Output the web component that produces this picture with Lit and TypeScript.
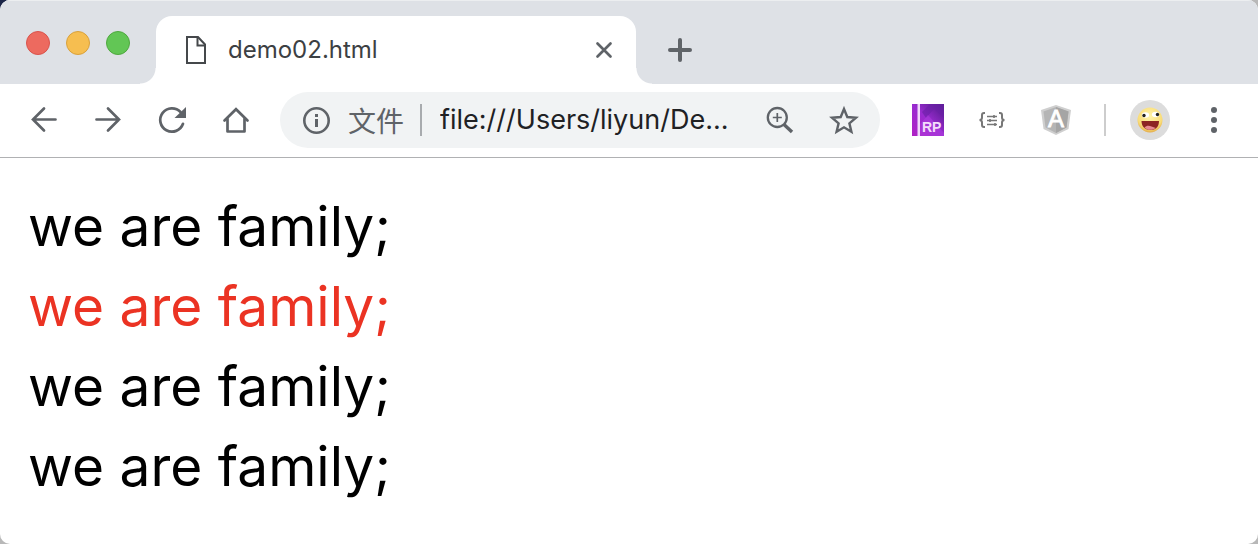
import { LitElement, html, css, svg } from "lit";
import { customElement, property } from "lit/decorators.js";

const icons = {
  file: svg`<path d="M3 1h11l7 7.500V27H3z" fill="none" stroke="#45484b" stroke-width="2"/><path d="M13.500 1v8.500H21" fill="none" stroke="#45484b" stroke-width="2"/>`,
};

@customElement("browser-toolbar")
class BrowserToolbar extends LitElement {
  @property() url = "";

  static styles = css`
    :host {
      display: flex;
      align-items: center;
      padding: 8px 12px 9px;
      background: #fff;
      border-bottom: 1px solid #b0b1b3;
      color: #5f6368;
    }
    button {
      display: flex;
      flex: none;
      align-items: center;
      justify-content: center;
      width: 64px;
      height: 56px;
      padding: 0;
      border: 0;
      background: none;
      color: inherit;
    }
    svg {
      display: block;
      flex: none;
    }
    .omnibox {
      display: flex;
      box-sizing: border-box;
      flex: 1;
      min-width: 0;
      align-items: center;
      height: 56px;
      margin: 0 16px 0 12px;
      padding: 0 4px 0 20px;
      border-radius: 28px;
      background: #f1f3f4;
    }
    .omnibox button.info {
      width: 32px;
    }
    .scheme {
      flex: none;
      margin-left: 16px;
      font: 28px/40px "Noto Sans CJK SC", sans-serif;
    }
    .divider {
      flex: none;
      width: 2px;
      height: 32px;
      margin: 0 18px 0 16px;
      background: #a8abae;
    }
    input {
      flex: 1;
      min-width: 0;
      padding: 0;
      border: 0;
      outline: 0;
      background: none;
      color: #202124;
      font: 27px/40px Inter, sans-serif;
    }
    .separator {
      flex: none;
      width: 2px;
      height: 32px;
      margin: 0 12px 0 16px;
      background: #cdcdcd;
    }
    .avatar {
      display: flex;
      align-items: center;
      justify-content: center;
      width: 40px;
      height: 40px;
      border-radius: 50%;
      background: #dcdcdc;
    }
  `;

  render() {
    return html`
      <button aria-label="Back">
        <svg width="32" height="32" viewBox="0 0 32 32" fill="none" stroke="currentColor" stroke-width="2.700" stroke-linecap="round"><path d="M27.500 15.500H5M16 4.500 5 15.500 16 26.500"/></svg>
      </button>
      <button aria-label="Forward">
        <svg width="32" height="32" viewBox="0 0 32 32" fill="none" stroke="currentColor" stroke-width="2.700" stroke-linecap="round"><path d="M4.500 15.500H27M16 4.500 27 15.500 16 26.500"/></svg>
      </button>
      <button aria-label="Reload">
        <svg width="32" height="32" viewBox="0 0 32 32" fill="none"><path d="M27 19.800A11.700 11.700 0 1 1 24.500 8" stroke="currentColor" stroke-width="2.700" stroke-linecap="round"/><path d="M30 3v11H18.500z" fill="currentColor"/></svg>
      </button>
      <button aria-label="Home">
        <svg width="32" height="32" viewBox="0 0 32 32" fill="none" stroke="currentColor" stroke-width="2.700" stroke-linecap="round" stroke-linejoin="round"><path d="M4.500 16.500 16 5.200 27.500 16.500" stroke-linejoin="miter"/><path d="M7.500 15v12.500h17V15"/></svg>
      </button>

      <div class="omnibox">
        <button class="info" aria-label="Site information">
          <svg width="32" height="32" viewBox="0 0 32 32" fill="none"><circle cx="16.500" cy="16.500" r="12.200" stroke="currentColor" stroke-width="2.600"/><path d="M16.500 10v3M16.500 15v8" stroke="currentColor" stroke-width="3"/></svg>
        </button>
        <label class="scheme" for="url">文件</label>
        <span class="divider"></span>
        <input id="url" type="text" .value=${this.url} spellcheck="false" />
        <button aria-label="Zoom">
          <svg width="32" height="32" viewBox="0 0 32 32" fill="none" stroke="currentColor"><circle cx="13.300" cy="13.500" r="9.500" stroke-width="2.300"/><path d="m20 20.500 8 7.500" stroke-width="3.400"/><path d="M13.300 9v9M8.800 13.500h9" stroke-width="1.700"/></svg>
        </button>
        <button aria-label="Bookmark">
          <svg width="32" height="32" viewBox="0 0 32 32"><path d="m16 5 3.300 8 8.700.700-6.600 5.700 2 8.400L16 23.300l-7.400 4.500 2-8.400L4 13.700l8.700-.700z" fill="none" stroke="currentColor" stroke-width="2.400"/></svg>
        </button>
      </div>

      <button aria-label="Axure RP">
        <svg width="32" height="32" viewBox="0 0 32 32">
          <defs><linearGradient id="rp" x1="0" y1="1" x2="1" y2="0"><stop offset="0" stop-color="#b020c4"/><stop offset=".5" stop-color="#9a2bd0"/><stop offset="1" stop-color="#4d1a86"/></linearGradient></defs>
          <path fill="url(#rp)" d="M0 0h32v32H0z"/>
          <path fill="#6a1fa6" opacity=".6" d="M10 8 18 0h14v14L22 5 14 14z"/>
          <path fill="#b040e0" opacity=".5" d="m8 20 8-9 16 18v3H8z"/>
          <path fill="#f0d8fa" d="M5.500 0h2.500v32H5.500z"/>
          <text x="10" y="28" font-family="Liberation Sans" font-weight="bold" font-size="14" fill="#f3dcfb">RP</text>
        </svg>
      </button>
      <button aria-label="JSON formatter">
        <svg width="28" height="20" viewBox="0 0 28 20" fill="none" stroke="#777"><path d="M7 3H6Q4 3 4 5v2.500Q4 10 1.500 10 4 10 4 12.500V15q0 2 2 2h1M21 3h1q2 0 2 2v2.500q0 2.500 2.500 2.500-2.500 0-2.500 2.500V15q0 2-2 2h-1" stroke-width="2"/><path d="M9 6.500h10M9 10.500h10M9 14.500h10" stroke-width="1.300"/><path d="M16 5v3M12 9v3M17 13v3" stroke-width="1.600"/></svg>
      </button>
      <button aria-label="Angular">
        <svg width="32" height="32" viewBox="0 0 32 32"><path d="M16 1 31 6 28.500 25 16 31 3.500 25 1 6z" fill="#cfcfcf"/><path d="M16 3 28.500 7.500 26.500 23.500 16 29 5.500 23.500 3.500 7.500z" fill="#b5b5b5"/><path d="M16 3 28.500 7.500 26.500 23.500 16 29z" fill="#a5a5a5"/><text x="16" y="23" text-anchor="middle" font-family="Liberation Sans" font-size="24" fill="#fff" stroke="#fff" stroke-width=".8">A</text></svg>
      </button>
      <span class="separator"></span>
      <button aria-label="Profile">
        <span class="avatar">
          <svg width="26" height="26" viewBox="0 0 26 26">
            <defs><radialGradient id="face" cx=".5" cy=".35" r=".7"><stop offset="0" stop-color="#fff3a8"/><stop offset=".7" stop-color="#f9dc78"/><stop offset="1" stop-color="#dd9e3c"/></radialGradient></defs>
            <circle cx="13" cy="13" r="12.500" fill="url(#face)"/>
            <ellipse cx="8.500" cy="8" rx="3.600" ry="2.800" fill="#fff"/><ellipse cx="18.500" cy="7.500" rx="3.600" ry="2.800" fill="#fff"/>
            <circle cx="7" cy="8.500" r="1.700" fill="#222"/><circle cx="20.500" cy="7.500" r="1.700" fill="#222"/>
            <path d="M4.500 14h17.500c0 6-3.500 9-8.500 9s-9-3-9-9z" fill="#8d2423"/><path d="M7.500 20.500c2-2.500 5-2 7-1s4 1 4 1.500c-2 2-8 3-11-.500z" fill="#e78a91"/>
          </svg>
        </span>
      </button>
      <button aria-label="Menu" class="menu">
        <svg width="32" height="32" viewBox="0 0 32 32" fill="currentColor"><circle cx="16" cy="6" r="3"/><circle cx="16" cy="16" r="3"/><circle cx="16" cy="26" r="3"/></svg>
      </button>
    `;
  }
}

@customElement("app-root")
class AppRoot extends LitElement {
  static styles = css`
    :host {
      display: block;
      background:
        linear-gradient(#1b2547, #1b2547) 0 0 / 16px 16px no-repeat,
        #b8b8b8;
    }
    .window {
      display: flex;
      flex-direction: column;
      min-height: 100vh;
      border-radius: 10px;
      overflow: hidden;
      background: #fff;
    }
    .strip {
      display: flex;
      align-items: flex-end;
      padding: 15px 0 0 26px;
      border-top: 1px solid #eceef0;
      background: #dee1e6;
    }
    .lights {
      display: flex;
      align-self: flex-start;
      gap: 16px;
      padding: 15px 10px 0 0;
    }
    .light {
      box-sizing: border-box;
      width: 24px;
      height: 24px;
      padding: 0;
      border: 1px solid;
      border-radius: 50%;
    }
    .red {
      background: #ed6a5f;
      border-color: #d9534c;
    }
    .yellow {
      background: #f6be50;
      border-color: #d9a13c;
    }
    .green {
      background: #62c655;
      border-color: #4fa83f;
    }
    .foot {
      width: 16px;
      height: 16px;
    }
    .foot.left {
      background: radial-gradient(circle at 0 0, transparent 15px, #fff 16px);
    }
    .foot.right {
      background: radial-gradient(circle at 100% 0, transparent 15px, #fff 16px);
    }
    .tab {
      display: flex;
      box-sizing: border-box;
      flex: 0 1 480px;
      min-width: 0;
      align-items: center;
      height: 68px;
      padding: 0 16px 0 28px;
      border-radius: 16px 16px 0 0;
      background: #fff;
    }
    .title {
      flex: 1;
      padding-left: 20px;
      color: #3c4043;
      font: 24px/32px Inter, sans-serif;
    }
    .icon {
      display: flex;
      align-items: center;
      justify-content: center;
      width: 32px;
      height: 32px;
      padding: 0;
      border: 0;
      background: none;
    }
    .add {
      align-self: center;
      margin-left: 12px;
    }
    svg {
      display: block;
      flex: none;
    }
    main {
      padding: 28px;
      color: #000;
      font: 55px/80px Inter, sans-serif;
    }
    p {
      margin: 0;
    }
    .active {
      color: #eb3323;
    }
  `;

  private lines = [false, true, false, false];

  render() {
    return html`
      <div class="window">
        <div class="strip">
          <div class="lights">
            <button class="light red" aria-label="Close window"></button>
            <button class="light yellow" aria-label="Minimise"></button>
            <button class="light green" aria-label="Full screen"></button>
          </div>
          <span class="foot left"></span>
          <div class="tab">
            <svg width="24" height="28" viewBox="0 0 24 28">${icons.file}</svg>
            <span class="title">demo02.html</span>
            <button class="icon" aria-label="Close tab">
              <svg width="32" height="32" viewBox="0 0 32 32"><path d="m9.500 9.500 13 13m0-13-13 13" stroke="#5f6368" stroke-width="2.700" stroke-linecap="round"/></svg>
            </button>
          </div>
          <span class="foot right"></span>
          <button class="icon add" aria-label="New tab">
            <svg width="32" height="32" viewBox="0 0 32 32"><path d="M16 6v20M6 16h20" stroke="#5f6368" stroke-width="4" stroke-linecap="round"/></svg>
          </button>
        </div>
        <browser-toolbar url="file:///Users/liyun/De..."></browser-toolbar>
        <main>
          ${this.lines.map((active) => html`<p class=${active ? "active" : ""}>we are family;</p>`)}
        </main>
      </div>
    `;
  }
}
